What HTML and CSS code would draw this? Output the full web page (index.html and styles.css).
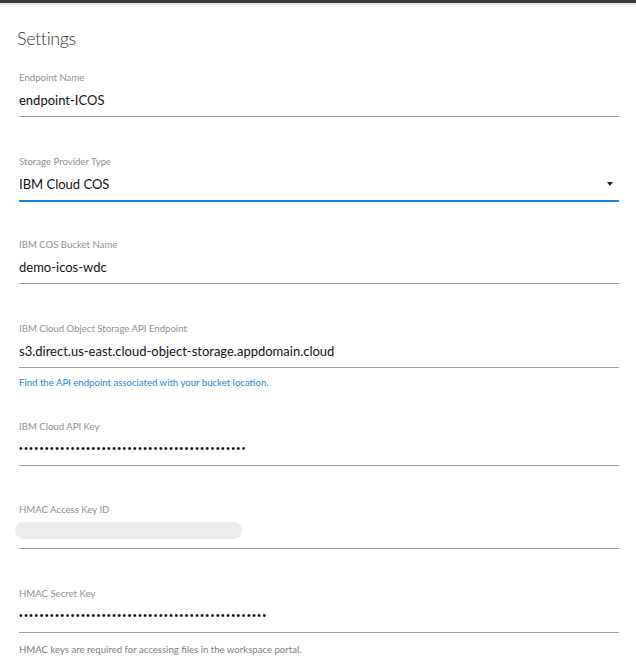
FILE: index.html
```html
<!DOCTYPE html>
<html lang="en">
<head>
<meta charset="utf-8">
<title>Settings</title>
<link rel="stylesheet" href="styles.css">
</head>
<body>
<div class="frame">
  <div class="topbar"></div>
  <div class="topline"></div>
  <main class="card">
    <h1 class="title">Settings</h1>

    <div class="field">
      <div class="label">Endpoint Name</div>
      <div class="value">endpoint-ICOS</div>
    </div>

    <div class="field field-select">
      <div class="label">Storage Provider Type</div>
      <div class="value select-value">
        <span>IBM Cloud COS</span>
        <span class="caret"></span>
      </div>
    </div>

    <div class="field">
      <div class="label">IBM COS Bucket Name</div>
      <div class="value">demo-icos-wdc</div>
    </div>

    <div class="field field-helped">
      <div class="label">IBM Cloud Object Storage API Endpoint</div>
      <div class="value">s3.direct.us-east.cloud-object-storage.appdomain.cloud</div>
      <div class="helper helper-link">Find the API endpoint associated with your bucket location.</div>
    </div>

    <div class="field">
      <div class="label">IBM Cloud API Key</div>
      <div class="value dots">&bull;&bull;&bull;&bull;&bull;&bull;&bull;&bull;&bull;&bull;&bull;&bull;&bull;&bull;&bull;&bull;&bull;&bull;&bull;&bull;&bull;&bull;&bull;&bull;&bull;&bull;&bull;&bull;&bull;&bull;&bull;&bull;&bull;&bull;&bull;&bull;&bull;&bull;&bull;&bull;&bull;&bull;&bull;&bull;</div>
    </div>

    <div class="field">
      <div class="label">HMAC Access Key ID</div>
      <div class="value"><div class="pill"></div></div>
    </div>

    <div class="field field-last">
      <div class="label">HMAC Secret Key</div>
      <div class="value dots">&bull;&bull;&bull;&bull;&bull;&bull;&bull;&bull;&bull;&bull;&bull;&bull;&bull;&bull;&bull;&bull;&bull;&bull;&bull;&bull;&bull;&bull;&bull;&bull;&bull;&bull;&bull;&bull;&bull;&bull;&bull;&bull;&bull;&bull;&bull;&bull;&bull;&bull;&bull;&bull;&bull;&bull;&bull;&bull;&bull;&bull;&bull;&bull;</div>
      <div class="helper helper-muted">HMAC keys are required for accessing files in the workspace portal.</div>
    </div>
  </main>
  <div class="bottombar"><div class="thumb"></div></div>
</div>
</body>
</html>
```

FILE: styles.css
```css
* { box-sizing: border-box; }

html, body {
  margin: 0;
  padding: 0;
  height: 100%;
  background: #ffffff;
}

body {
  font-family: Lato, "Open Sans", "Liberation Sans", sans-serif;
  color: #1a1a1a;
  overflow: hidden;
}

.frame {
  display: flex;
  flex-direction: column;
  height: 667px;
}

.topbar {
  height: 3px;
  background: #3b3b3b;
  flex: none;
}

.topline {
  height: 2px;
  background: #e6e6e6;
  flex: none;
}

.card {
  flex: 1;
  padding: 19px 17px 0 19px;
  background: #fff;
}

.title {
  margin: 0 0 19px -2px;
  font-size: 18px;
  font-weight: 300;
  letter-spacing: -0.4px;
  line-height: 28px;
  color: #333;
}

.field {
  border-bottom: 1px solid #a3a3a3;
  margin-bottom: 37.5px;
  padding-bottom: 6px;
}

.label {
  font-size: 9.6px;
  line-height: 14px;
  color: #8f8f8f;
  margin-bottom: 5px;
}

.value {
  font-size: 13px;
  line-height: 20px;
  height: 20px;
  color: #111;
}

.field-select {
  border-bottom: 2px solid #1587d4;
  margin-bottom: 36.5px;
}

.select-value {
  display: flex;
  justify-content: space-between;
  align-items: center;
}

.caret {
  width: 0;
  height: 0;
  margin-right: 6px;
  border-left: 3.5px solid transparent;
  border-right: 3.5px solid transparent;
  border-top: 4px solid #222;
}

.field-helped,
.field-last {
  border-bottom: none;
  padding-bottom: 0;
}

.field-helped .value,
.field-last .value {
  border-bottom: 1px solid #a3a3a3;
  box-sizing: content-box;
  height: 20px;
  padding-bottom: 6px;
}

.field-helped {
  margin-bottom: 30px;
}

.helper {
  font-size: 9.6px;
  line-height: 14px;
  margin-top: 8px;
}

.helper-link { color: #1a8ad6; }
.helper-muted { color: #7d7d7d; margin-top: 10px; }

.dots {
  font-family: "Liberation Sans", sans-serif;
  font-size: 10px;
  letter-spacing: 1.68px;
  color: #000;
  line-height: 20px;
}

.pill {
  width: 227px;
  height: 17px;
  margin: 0 0 0 -4px;
  border-radius: 9px;
  background: #ebebeb;
}

.bottombar {
  height: 3px;
  flex: none;
  background: #2b2b2b;
  padding-left: 314px;
}

.thumb {
  width: 36px;
  height: 3px;
  background: #5a5a5a;
}
```
